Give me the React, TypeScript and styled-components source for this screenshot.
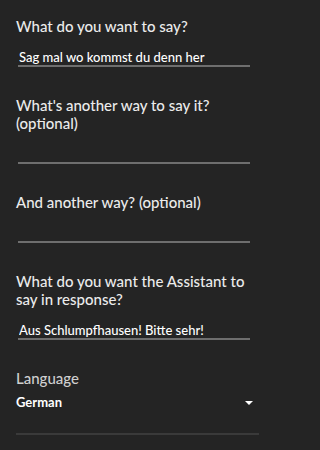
import React from "react";
import styled, { createGlobalStyle } from "styled-components";

const GlobalStyle = createGlobalStyle`
  html, body {
    margin: 0;
    padding: 0;
    background: #242424;
  }
  body {
    font-family: Lato, "Open Sans", "Noto Sans", sans-serif;
    -webkit-font-smoothing: antialiased;
  }
  * { box-sizing: border-box; }
`;

const Page = styled.div`
  width: 268px;
  min-height: 450px;
  background: #242424;
  padding: 17px 9px 0 16px;
  display: flex;
  flex-direction: column;
  gap: 29px;
`;

const Field = styled.div`
  display: flex;
  flex-direction: column;
  gap: 14px;
`;

const Label = styled.label<{ $muted?: boolean }>`
  font-size: 15px;
  line-height: 18px;
  color: ${(p) => (p.$muted ? "#cfcfcf" : "#ebebeb")};
  font-weight: 500;
`;

const TextInput = styled.input`
  display: block;
  margin: 0 0 0 2px;
  width: 232px;
  height: 18px;
  padding: 0 0 0 1px;
  border: none;
  border-bottom: 2px solid #6e6e6e;
  background: transparent;
  color: #ffffff;
  font-family: Lato, "Open Sans", "Noto Sans", sans-serif;
  font-size: 13px;
  font-weight: 500;
  line-height: 16px;
  outline: none;
`;

const SelectRow = styled.div`
  display: flex;
  align-items: center;
  justify-content: space-between;
  width: 243px;
  margin-top: -7px;
  padding: 0 6px 23px 0;
  border-bottom: 2px solid #3a3a3a;
`;

const SelectValue = styled.span`
  font-size: 13px;
  line-height: 16px;
  font-weight: 700;
  color: #ffffff;
`;

const Caret = styled.span`
  width: 0;
  height: 0;
  margin-top: 1px;
  border-left: 4px solid transparent;
  border-right: 4px solid transparent;
  border-top: 4px solid #ffffff;
`;

export default function App() {
  return (
    <>
      <GlobalStyle />
      <Page>
        <Field>
          <Label>What do you want to say?</Label>
          <TextInput readOnly value="Sag mal wo kommst du denn her" />
        </Field>
        <Field>
          <Label>
            What's another way to say it?
            <br />
            (optional)
          </Label>
          <TextInput readOnly value="" />
        </Field>
        <Field>
          <Label>And another way? (optional)</Label>
          <TextInput readOnly value="" />
        </Field>
        <Field>
          <Label>
            What do you want the Assistant to
            <br />
            say in response?
          </Label>
          <TextInput readOnly value="Aus Schlumpfhausen! Bitte sehr!" />
        </Field>
        <Field>
          <Label $muted>Language</Label>
          <SelectRow>
            <SelectValue>German</SelectValue>
            <Caret />
          </SelectRow>
        </Field>
      </Page>
    </>
  );
}
